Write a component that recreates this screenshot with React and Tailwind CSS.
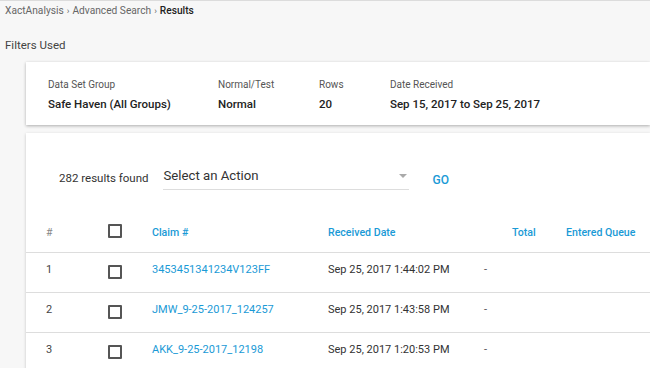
const rows = [
    { n: 1, claim: "3453451341234V123FF", date: "Sep 25, 2017 1:44:02 PM" },
    { n: 2, claim: "JMW_9-25-2017_124257", date: "Sep 25, 2017 1:43:58 PM" },
    { n: 3, claim: "AKK_9-25-2017_12198", date: "Sep 25, 2017 1:20:53 PM" },
];

function Box() {
    return <span className="block w-[14px] h-[14px] border-2 border-[#555] rounded-[1px] bg-white" />;
}

export default function App() {
    return (
        <div className="w-[650px] h-[368px] overflow-hidden bg-[#f7f7f7] border-t border-[#dcdcdc] font-['Roboto',sans-serif] text-[#333]">
            {/* breadcrumb */}
            <div className="pl-[5px] pt-[3px] text-[10.2px] leading-[14px] text-[#666] flex items-center gap-[3px]">
                <span>XactAnalysis</span>
                <span className="text-[9px]">›</span>
                <span>Advanced Search</span>
                <span className="text-[9px]">›</span>
                <span className="font-medium text-[#222]">Results</span>
            </div>
            <div className="pl-[5px] mt-[20px] text-[11.5px] leading-[14px] text-[#444]">Filters Used</div>

            {/* filters card */}
            <div className="ml-[26px] mt-[10px] h-[63px] bg-white shadow-[0_1px_3px_rgba(0,0,0,0.3)] flex pl-[22px] pt-[17px]">
                <div className="w-[170px]">
                    <div className="text-[10px] leading-[12px] text-[#555]">Data Set Group</div>
                    <div className="mt-[6px] text-[11.5px] leading-[14px] font-medium text-[#222]">Safe Haven (All Groups)</div>
                </div>
                <div className="w-[101px]">
                    <div className="text-[10px] leading-[12px] text-[#555]">Normal/Test</div>
                    <div className="mt-[6px] text-[11.5px] leading-[14px] font-medium text-[#222]">Normal</div>
                </div>
                <div className="w-[71px]">
                    <div className="text-[10px] leading-[12px] text-[#555]">Rows</div>
                    <div className="mt-[6px] text-[11.5px] leading-[14px] font-medium text-[#222]">20</div>
                </div>
                <div>
                    <div className="text-[10px] leading-[12px] text-[#555]">Date Received</div>
                    <div className="mt-[6px] text-[11.5px] leading-[14px] font-medium text-[#222]">Sep 15, 2017 to Sep 25, 2017</div>
                </div>
            </div>

            {/* results card */}
            <div className="ml-[26px] mt-[8px] h-[240px] bg-white shadow-[0_1px_3px_rgba(0,0,0,0.2)]">
                <div className="flex items-end pt-[28px] h-[52px]">
                    <span className="ml-[33px] text-[11.5px] leading-[14px] text-[#333]">282 results found</span>
                    <div className="ml-[15px] w-[246px] border-b border-[#ddd] flex items-center justify-between pb-[5px] relative top-[5px]">
                        <span className="text-[13.2px] leading-[16px] text-[#333]">Select an Action</span>
                        <span className="mr-[2px] w-0 h-0 border-l-[4px] border-r-[4px] border-t-[4px] border-l-transparent border-r-transparent border-t-[#aaa]" />
                    </div>
                    <span className="ml-[23px] text-[12px] leading-[14px] font-medium text-[#1a9ad6] relative top-[2px]">GO</span>
                </div>

                <div className="mt-[40px] flex items-center h-[28px] border-b border-[#ddd] text-[10.6px] leading-[14px] pb-[12px]">
                    <span className="w-[82px] pl-[20px] text-[#888]">#</span>
                    <span className="w-[44px] relative -top-[2px]"><Box /></span>
                    <span className="w-[176px] text-[#1a9ad6] font-medium">Claim #</span>
                    <span className="w-[184px] text-[#1a9ad6] font-medium">Received Date</span>
                    <span className="w-[54px] text-[#1a9ad6] font-medium">Total</span>
                    <span className="text-[#1a9ad6] font-medium">Entered Queue</span>
                </div>

                {rows.map((r) => (
                    <div key={r.n} className="flex items-center h-[40px] border-b border-[#ddd] text-[11px] leading-[14px] pb-[6px]">
                        <span className="w-[82px] pl-[20px] text-[#444]">{r.n}</span>
                        <span className="w-[44px] relative top-[2px]"><Box /></span>
                        <span className="w-[176px] text-[#1a9ad6]">{r.claim}</span>
                        <span className="w-[156px] text-[#333]">{r.date}</span>
                        <span className="text-[#555]">-</span>
                    </div>
                ))}
            </div>
        </div>
    );
}
